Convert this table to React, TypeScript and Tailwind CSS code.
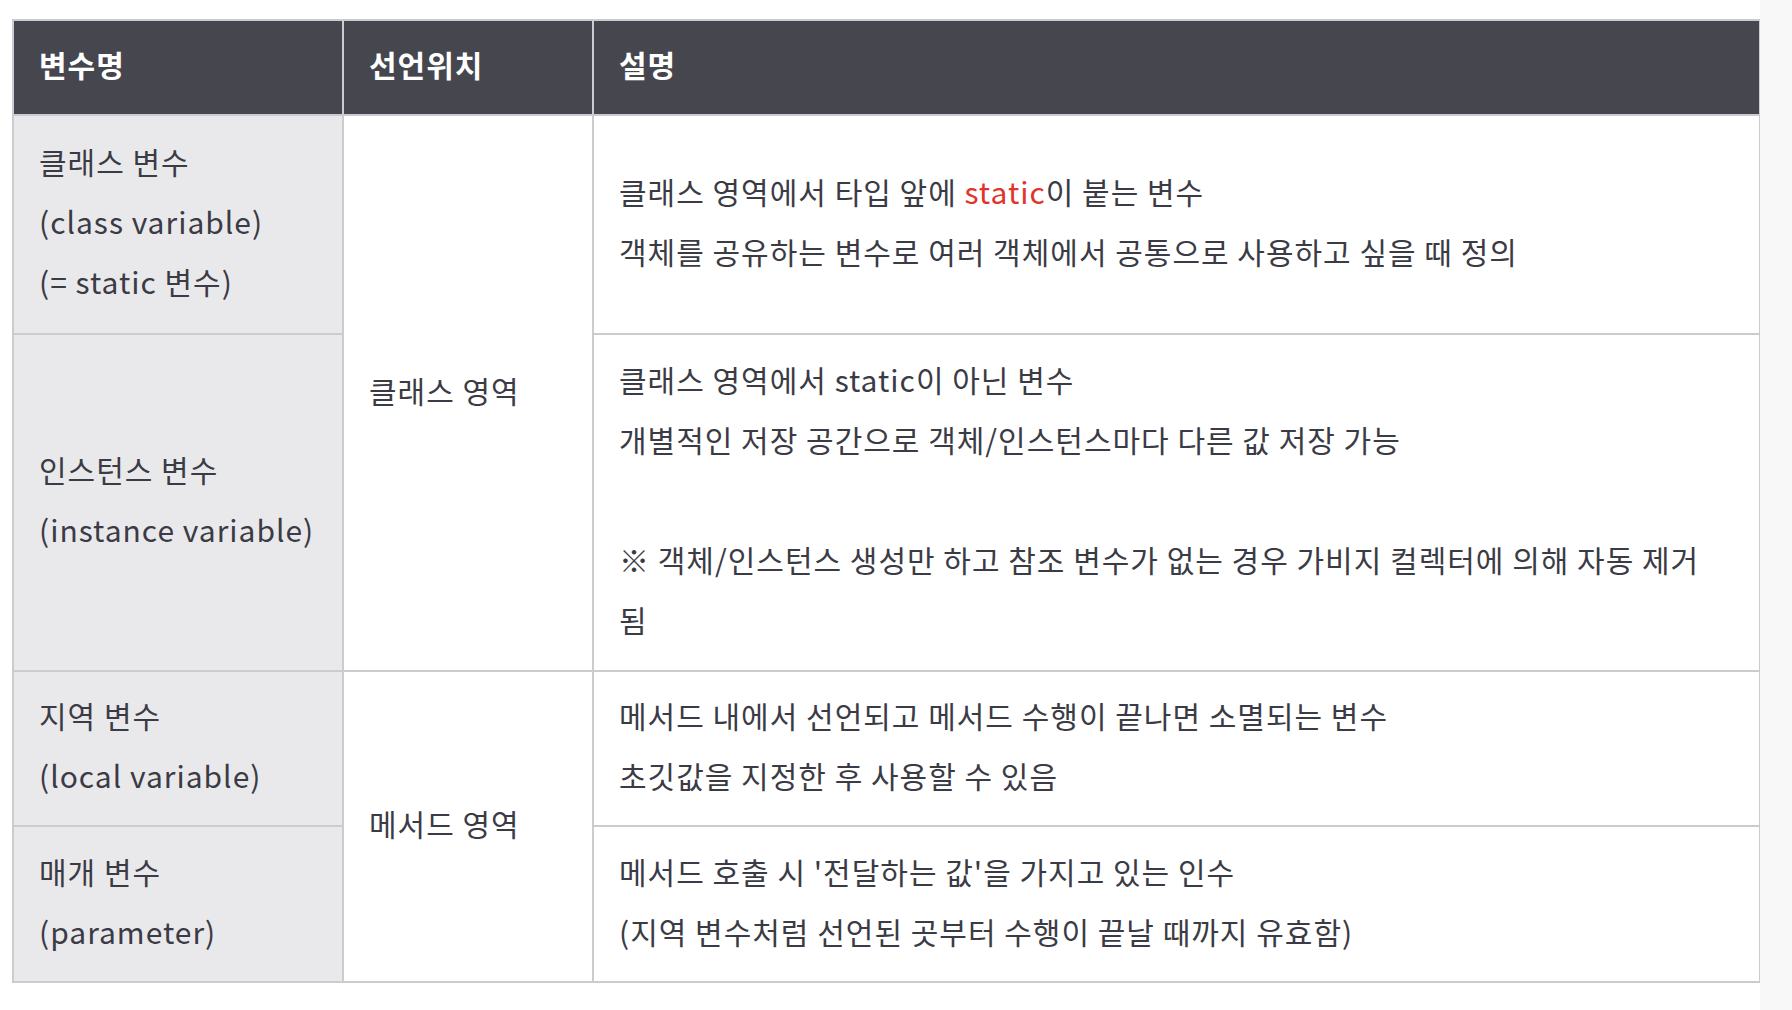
import React from "react";

const font = { fontFamily: '"Noto Sans CJK KR", "Noto Sans", sans-serif' };

const cell = "border-2 border-[#cbcbd0] px-[25px] pb-[7px] align-middle";

export default function App() {
  return (
    <div className="w-full h-[1010px] bg-white flex" style={font}>
      {/* Table area */}
      <div className="w-[1760px] pl-[12px] pt-[19px]">
        <table className="w-[1749px] border-collapse table-fixed text-[30px] leading-[60px] tracking-[1px] text-[#3b3b45]">
          <colgroup>
            <col className="w-[330px]" />
            <col className="w-[250px]" />
            <col />
          </colgroup>
          <thead>
            <tr className="h-[95px] bg-[#46464f] text-white">
              <th className={cell + " text-left font-bold"}>변수명</th>
              <th className={cell + " text-left font-bold"}>선언위치</th>
              <th className={cell + " text-left font-bold"}>설명</th>
            </tr>
          </thead>
          <tbody>
            <tr className="h-[219px]">
              <td className={cell + " bg-[#e9e9ec]"}>
                클래스 변수<br />(class variable)<br />(= static 변수)
              </td>
              <td rowSpan={2} className={cell}>
                클래스 영역
              </td>
              <td className={cell}>
                클래스 영역에서 타입 앞에 <span className="text-[#e0352b]">static</span>이 붙는 변수
                <br />
                객체를 공유하는 변수로 여러 객체에서 공통으로 사용하고 싶을 때 정의
              </td>
            </tr>
            <tr className="h-[337px]">
              <td className={cell + " bg-[#e9e9ec]"}>
                인스턴스 변수<br />(instance variable)
              </td>
              <td className={cell}>
                클래스 영역에서 static이 아닌 변수
                <br />
                개별적인 저장 공간으로 객체/인스턴스마다 다른 값 저장 가능
                <br />
                <br />
                <span className="whitespace-nowrap">※ 객체/인스턴스 생성만 하고 참조 변수가 없는 경우 가비지 컬렉터에 의해 자동 제거</span>
                <br />
                됨
              </td>
            </tr>
            <tr className="h-[155px]">
              <td className={cell + " bg-[#e9e9ec]"}>
                지역 변수<br />(local variable)
              </td>
              <td rowSpan={2} className={cell}>
                메서드 영역
              </td>
              <td className={cell}>
                메서드 내에서 선언되고 메서드 수행이 끝나면 소멸되는 변수
                <br />
                초깃값을 지정한 후 사용할 수 있음
              </td>
            </tr>
            <tr className="h-[156px]">
              <td className={cell + " bg-[#e9e9ec]"}>
                매개 변수<br />(parameter)
              </td>
              <td className={cell}>
                메서드 호출 시 '전달하는 값'을 가지고 있는 인수
                <br />
                (지역 변수처럼 선언된 곳부터 수행이 끝날 때까지 유효함)
              </td>
            </tr>
          </tbody>
        </table>
      </div>
      {/* Faint right strip */}
      <div className="flex-1 bg-[#f8f8f8]" />
    </div>
  );
}
